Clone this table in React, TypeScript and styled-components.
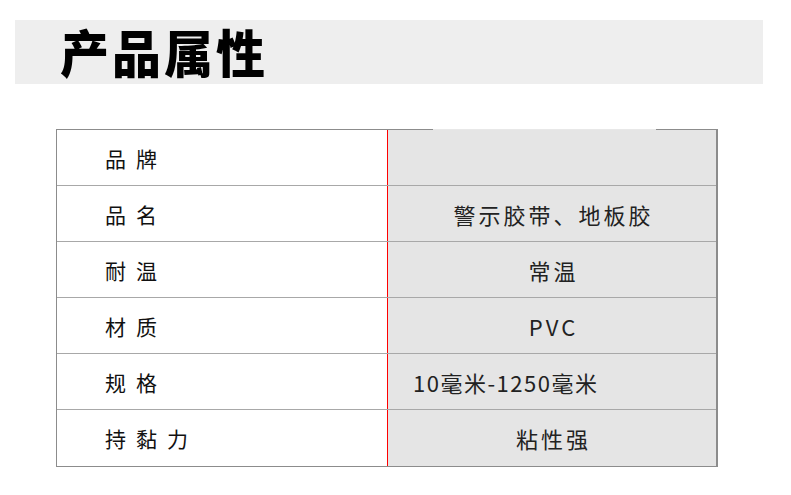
import React from "react";
import styled, { createGlobalStyle } from "styled-components";

const GlobalStyle = createGlobalStyle`
  html, body {
    margin: 0;
    padding: 0;
    background: #fff;
  }
  body {
    font-family: "Noto Sans CJK SC", "Noto Sans", sans-serif;
    color: #111;
  }
`;

const rows: { label: string; value: string; align?: "left" | "center" }[] = [
  { label: "品牌", value: "" },
  { label: "品名", value: "警示胶带、地板胶" },
  { label: "耐温", value: "常温" },
  { label: "材质", value: "PVC" },
  { label: "规格", value: "10毫米-1250毫米", align: "left" },
  { label: "持黏力", value: "粘性强" },
];

const App = () => {
  return (
    <Page>
      <GlobalStyle />
      <TitleBar>
        <Title>产品属性</Title>
      </TitleBar>
      <Table>
        {rows.map((row, i) => (
          <Row key={row.label} $last={i === rows.length - 1}>
            <LabelCell>{row.label}</LabelCell>
            <ValueCell $align={row.align || "center"}>{row.value}</ValueCell>
          </Row>
        ))}
      </Table>
    </Page>
  );
};

const Page = styled.div`
  width: 791px;
  height: 495px;
  padding-top: 20px;
  box-sizing: border-box;
  overflow: hidden;
`;

const TitleBar = styled.div`
  margin-left: 15px;
  width: 748px;
  height: 64px;
  background: #eeeeee;
  display: flex;
  align-items: center;
  padding-left: 45px;
  box-sizing: border-box;
`;

const Title = styled.h1`
  margin: 0 0 4px;
  font-size: 49px;
  font-weight: 900;
  letter-spacing: 3px;
  line-height: 1;
  color: #000;
  transform: scaleY(1.04);
`;

const Table = styled.div`
  position: relative;
  margin: 45px 0 0 56px;
  width: 662px;
  border: 1px solid #8c8c8c;
  border-right: 2px solid #8c8c8c;
  box-sizing: border-box;

  &::after {
    content: "";
    position: absolute;
    top: -1px;
    left: 376px;
    width: 223px;
    height: 1px;
    background: #e8e8e8;
  }
`;

const Row = styled.div<{ $last: boolean }>`
  display: grid;
  grid-template-columns: 331px 1fr;
  height: 56px;
  border-bottom: ${(p) => (p.$last ? "none" : "1px solid #a8a8a8")};
  box-sizing: border-box;
`;

const LabelCell = styled.div`
  display: flex;
  align-items: center;
  padding-left: 48px;
  font-size: 21px;
  letter-spacing: 10px;
  color: #111;
  border-right: 1px solid #ff0000;
  background: #fff;
`;

const ValueCell = styled.div<{ $align: "left" | "center" }>`
  display: flex;
  align-items: center;
  justify-content: ${(p) => (p.$align === "left" ? "flex-start" : "center")};
  padding-left: ${(p) => (p.$align === "left" ? "25px" : "3px")};
  background: #e5e5e5;
  font-size: 22px;
  letter-spacing: ${(p) => (p.$align === "left" ? "1.5px" : "3px")};
  color: #222;
`;

export default App;
